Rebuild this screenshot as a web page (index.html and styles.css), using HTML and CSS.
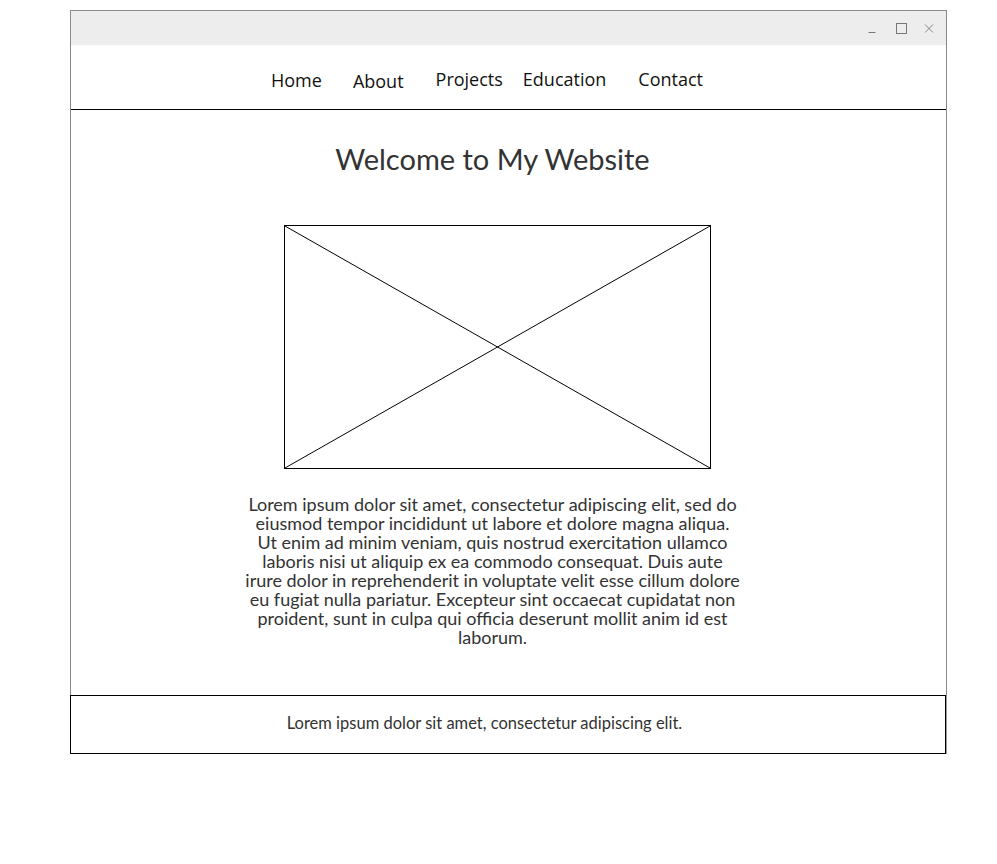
FILE: index.html
```html
<!DOCTYPE html>
<html>
<head>
<meta charset="utf-8">
<link rel="stylesheet" href="styles.css">
</head>
<body>
<div class="window">
  <div class="titlebar">
    <svg class="ctrl" width="12" height="12" viewBox="0 0 12 12"><line x1="1.5" y1="9.5" x2="8.5" y2="9.5" stroke="#777" stroke-width="1"/></svg>
    <svg class="ctrl" width="12" height="12" viewBox="0 0 12 12"><rect x="1.5" y="0.5" width="10" height="10" fill="none" stroke="#777" stroke-width="1"/></svg>
    <svg class="ctrl" width="12" height="12" viewBox="0 0 12 12"><path d="M2 1.5 L10 9.5 M10 1.5 L2 9.5" stroke="#888" stroke-width="1" fill="none"/></svg>
  </div>
  <nav class="nav">
    <a class="nav-item home">Home</a>
    <a class="nav-item about">About</a>
    <a class="nav-item projects">Projects</a>
    <a class="nav-item education">Education</a>
    <a class="nav-item contact">Contact</a>
  </nav>
  <main class="main">
    <h1 class="title">Welcome to My Website</h1>
    <div class="placeholder">
      <svg width="100%" height="100%" viewBox="0 0 100 100" preserveAspectRatio="none"><line x1="0" y1="0" x2="100" y2="100" stroke="#000" stroke-width="1" vector-effect="non-scaling-stroke"/><line x1="100" y1="0" x2="0" y2="100" stroke="#000" stroke-width="1" vector-effect="non-scaling-stroke"/></svg>
    </div>
    <p class="text">Lorem ipsum dolor sit amet, consectetur adipiscing elit, sed do<br>eiusmod tempor incididunt ut labore et dolore magna aliqua.<br>Ut enim ad minim veniam, quis nostrud exercitation ullamco<br>laboris nisi ut aliquip ex ea commodo consequat. Duis aute<br>irure dolor in reprehenderit in voluptate velit esse cillum dolore<br>eu fugiat nulla pariatur. Excepteur sint occaecat cupidatat non<br>proident, sunt in culpa qui officia deserunt mollit anim id est<br>laborum.</p>
  </main>
  <footer class="footer">
    <p class="footer-text">Lorem ipsum dolor sit amet, consectetur adipiscing elit.</p>
  </footer>
</div>
</body>
</html>
```

FILE: styles.css
```css
html, body {
  margin: 0;
  padding: 0;
  background: #fff;
}
body {
  font-family: "Lato", "Open Sans", sans-serif;
  color: #333;
}
.window {
  margin: 10px 0 0 70px;
  width: 875px;
  border: 1px solid #8a8a8a;
  border-bottom: none;
}
.titlebar {
  height: 34px;
  background: #ededed;
  display: flex;
  justify-content: flex-end;
  align-items: center;
  gap: 16px;
  padding-right: 11px;
}
.ctrl {
  display: block;
  margin-top: 1px;
}
.nav {
  height: 65px;
  border-bottom: 1px solid #000;
  display: flex;
  align-items: center;
  padding-left: 200px;
  padding-top: 4px;
  box-sizing: border-box;
}
.nav-item {
  font-family: "Open Sans", sans-serif;
  font-size: 18px;
  color: #111;
  display: block;
}
.home { margin-top: 2px; }
.about { margin-left: 31px; margin-top: 4px; }
.projects { margin-left: 32px; }
.education { margin-left: 20px; }
.contact { margin-left: 32px; }
.main {
  height: 585px;
  display: flex;
  flex-direction: column;
  align-items: center;
  padding-top: 1px;
  box-sizing: border-box;
}
.title {
  margin: 28px 0 0 -32px;
  font-weight: normal;
  font-size: 29px;
  line-height: 40px;
  color: #333;
}
.placeholder {
  margin-top: 46px;
  width: 425px;
  height: 242px;
  border: 1px solid #000;
  margin-left: -23px;
}
.placeholder svg {
  display: block;
}
.text {
  margin: 26px 0 0 -32px;
  font-size: 18px;
  line-height: 19px;
  text-align: center;
  color: #333;
}
.footer {
  margin-left: -1px;
  border: 1px solid #000;
  box-shadow: 1px 1px 0 #999;
  display: flex;
  align-items: center;
  justify-content: center;
  padding-bottom: 3px;
  box-sizing: content-box;
  height: 54px;
}
.footer-text {
  margin: 0 0 0 -47px;
  font-size: 16.5px;
  color: #333;
}
```
